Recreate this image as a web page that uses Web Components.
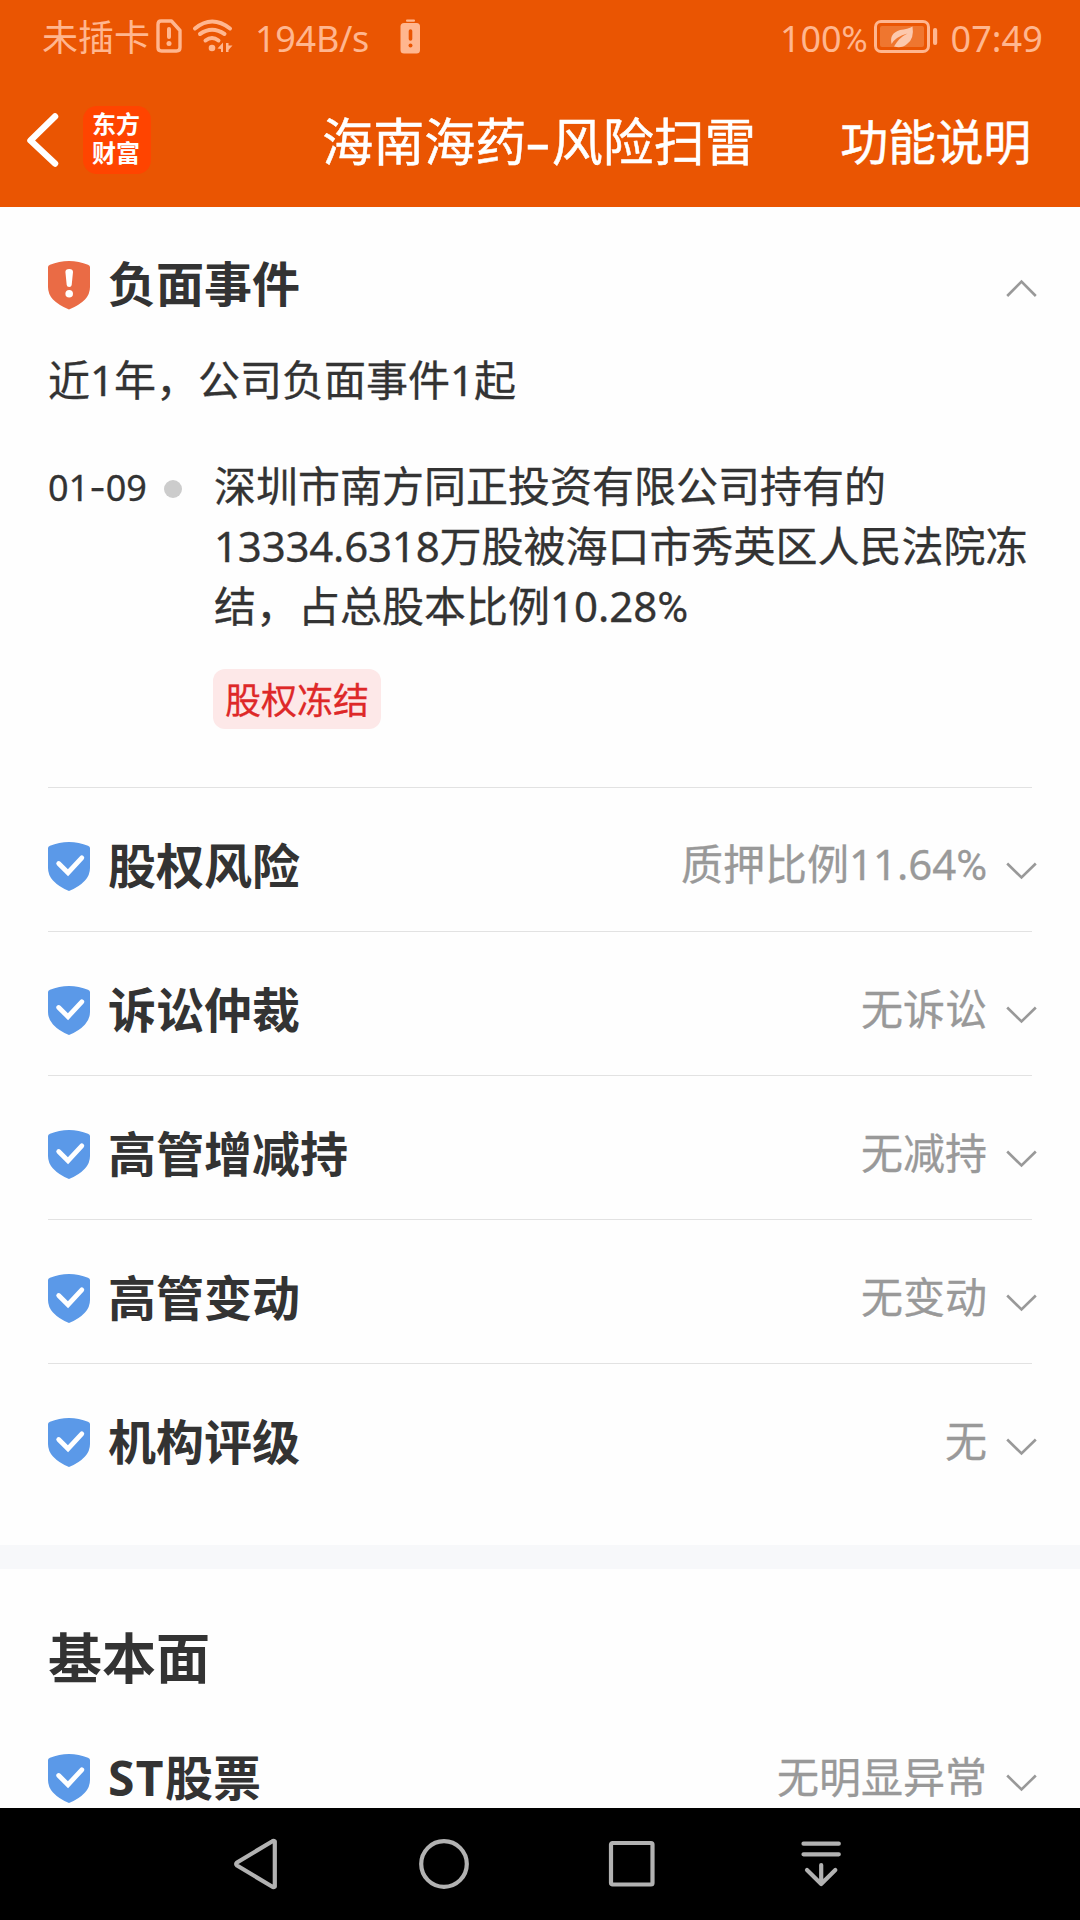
<!DOCTYPE html>
<html lang="zh-CN">
<head>
<meta charset="utf-8">
<title>海南海药-风险扫雷</title>
<style>
  html, body { margin: 0; height: 100%; }
  body { width: 1080px; height: 1920px; overflow: hidden; background: #fefefe; font-family: "Noto Sans", "Noto Sans CJK SC", sans-serif; color: #333; }
</style>
</head>
<body>
<risk-app></risk-app>
<script>
const define = (name, html) => {
  const template = document.createElement('template');
  template.innerHTML = html;
  customElements.define(name, class extends HTMLElement {
    constructor() {
      super();
      this.attachShadow({ mode: 'open' }).append(template.content.cloneNode(true));
    }
  });
};

define('status-bar', `
<style>
  :host { display: flex; justify-content: space-between; align-items: center; height: 76px; padding: 0 37px 0 42px; box-sizing: border-box; font-size: 36px; line-height: 48px; color: #ffb68f; }
  .g { display: flex; align-items: center; height: 76px; }
  svg { display: block; flex: none; }
  .sim { margin-left: 5px; } .wifi { margin-left: 9px; }
  .speed { margin: 2px 0 0 22px; width: 112px; white-space: nowrap; letter-spacing: -.3px; }
  .warn { margin-left: 32px; }
  .pct { margin-top: 2px; white-space: nowrap; letter-spacing: -.2px; }
  .pc { font-family: Roboto, sans-serif; }
  .bat { margin-left: 7px; }
  .time { margin: 2px 0 0 12px; white-space: nowrap; letter-spacing: .1px; }
</style>
<div class="g">
  <span>未插卡</span>
  <svg class="sim" width="28" height="76" viewBox="155 0 28 76" fill="none" stroke="currentColor" stroke-width="3.4" stroke-linejoin="round"><path d="M161 21H171.5L180 30.5V47.5Q180 51 176.5 51H161.500Q158 51 158 47.500V24.500Q158 21 161 21Z"/><path d="M169 29V37" stroke-width="4" stroke-linecap="round"/><circle cx="169" cy="43.500" r="2.500" fill="currentColor" stroke="none"/></svg>
  <svg class="wifi" width="41" height="76" viewBox="191 0 41 76" fill="none" stroke="currentColor" stroke-width="4" stroke-linecap="round"><path d="M194 28.500Q211 14.500 229 28.500M199 34Q211 25.500 223.500 34M204.500 40.500Q211 35.500 217.500 40.500"/><circle cx="211" cy="48" r="3.300" fill="currentColor" stroke="none"/><path d="M216.500 48.500L222 42.500V52H220V49ZM225 43V52H227.500V50L231.500 45.500L227.500 45.500V43Z" fill="currentColor" stroke="none"/></svg>
  <span class="speed">194B/s</span>
  <svg class="warn" width="22" height="76" viewBox="399 0 22 76" fill="currentColor"><rect x="406" y="19.500" width="9" height="2.200" rx="1"/><rect x="400.500" y="23" width="19.500" height="30.500" rx="3.500"/><path d="M410.500 31V39" stroke="#ea5502" stroke-width="3.600" stroke-linecap="round"/><circle cx="410.500" cy="45.500" r="2" fill="#ea5502"/></svg>
</div>
<div class="g">
  <span class="pct">100<span class="pc">%</span></span>
  <svg class="bat" width="64" height="76" viewBox="874 0 64 76" fill="none"><rect x="875.500" y="21.500" width="53" height="30" rx="5.500" stroke="currentColor" stroke-width="3"/><rect x="880" y="26" width="44" height="21" rx="2" fill="#ef762f"/><rect x="933" y="28" width="4.200" height="17" rx="2" fill="currentColor"/><path d="M891.500 44Q889 33.500 900 30Q908 29 912.500 26.500Q914.500 39 907 44Q901.500 49 894 46.500Q899 37.500 907.500 33.500Q896 36.500 891.500 44Z" fill="#fcc8ad"/></svg>
  <span class="time">07:49</span>
</div>`);

define('nav-header', `
<style>
  :host { display: grid; grid-template-columns: 1fr auto 1fr; align-items: center; height: 131px; padding: 0 49px 3px 26px; box-sizing: border-box; color: #fff; line-height: 64px; -webkit-text-stroke: .5px #fff; }
  .left { display: flex; align-items: center; }
  .logo { width: 68px; height: 68px; margin-left: 23px; box-sizing: border-box; padding: 2px 0 0 9px; border-radius: 14px; background: #ff4400; font: 700 24px/29px "Noto Sans CJK SC", sans-serif; -webkit-text-stroke: 0; }
  h1 { margin: 3px 0 0 21px; font-size: 51px; font-weight: 400; white-space: nowrap; }
  .help { margin-top: 3px; text-align: right; font-size: 48px; letter-spacing: -.3px; }
  svg { display: block; }
</style>
<div class="left">
  <svg width="34" height="60" viewBox="0 0 34 60" fill="none" stroke="#fff" stroke-width="6.500" stroke-linecap="round" stroke-linejoin="round"><path d="M29 6.500L4.500 30.500L29 53.500"/></svg>
  <div class="logo">东方<br>财富</div>
</div>
<h1><slot></slot></h1>
<div class="help"><slot name="action"></slot></div>`);

define('shield-ok', `
<style>:host { display: block; flex: none; width: 42px; height: 49px; } svg { display: block; }</style>
<svg width="42" height="49" viewBox="0 0 42 49"><path d="M0 6Q0 4.500 2 3.800Q11 0 21 0T40 3.800Q42 4.500 42 6V26Q42 33 37 38.500Q31 45 21 49Q11 45 5 38.500Q0 33 0 26Z" fill="#5b99e8"/><path d="M10.700 21.500L20 30.700L33.800 15.800" fill="none" stroke="#fff" stroke-width="4.800" stroke-linecap="round" stroke-linejoin="miter"/></svg>`);

define('shield-alert', `
<style>:host { display: block; flex: none; width: 42px; height: 49px; } svg { display: block; }</style>
<svg width="42" height="49" viewBox="0 0 42 49"><path d="M0 6Q0 4.500 2 3.800Q11 0 21 0T40 3.800Q42 4.500 42 6V26Q42 33 37 38.500Q31 44.500 21 48.500Q11 44.500 5 38.500Q0 33 0 26Z" fill="#ea6b45"/><path d="M17.400 11Q17.400 8 21.200 8T25 11L23.700 24Q23.500 26 21.200 26T18.700 24Z" fill="#fff"/><circle cx="21.200" cy="32.700" r="3.800" fill="#fff"/></svg>`);

define('risk-row', `
<style>
  :host { display: flex; align-items: center; height: 144px; box-sizing: border-box; padding-top: 13px; border-top: 1px solid #e2e2e2; }
  :host([plain]) { border-top-color: transparent; }
  :host([open]) { height: 155px; padding-top: 1px; border: 0; }
  h2 { flex: 1; margin: 0 0 0 18px; font-size: 48px; line-height: 60px; font-weight: 700; white-space: nowrap; }
  :host([open]) h2 { margin-top: -2px; }
  .note { font-size: 42px; line-height: 60px; margin-top: -2px; color: #999; white-space: nowrap; -webkit-text-stroke: .3px #999; }
  svg { display: block; flex: none; margin: 0 -5px 0 19px; }
  .up, :host([open]) .down { display: none; }
  :host([open]) .up { display: block; }
</style>
<slot name="icon"><shield-ok></shield-ok></slot>
<h2><slot></slot></h2>
<span class="note"><slot name="note"></slot></span>
<svg width="31" height="48" viewBox="0 0 31 48" fill="none" stroke="#999" stroke-width="2.600"><path class="down" d="M1.200 21.500L15.500 35.500L29.800 21.500"/><path class="up" d="M1.200 35L15.500 20.500L29.800 35"/></svg>`);

define('risk-event', `
<style>
  :host { display: flex; height: 331px; -webkit-text-stroke: .3px; }
  .date { width: 116px; font-size: 36px; line-height: 64px; white-space: nowrap; }
  .dot { width: 18px; height: 18px; margin: 24px 32px 0 0; border-radius: 50%; background: #ccc; }
  .body { flex: 1; font-size: 42px; line-height: 60px; white-space: nowrap; }
  .tag { display: block; width: max-content; height: 60px; margin: 31px 0 0 -1px; padding: 0 12px; border-radius: 12px; background: #fde8e8; color: #de2828; font-size: 36px; line-height: 63px; }
</style>
<div class="date"><slot name="date"></slot></div>
<div class="dot"></div>
<div class="body"><slot></slot><span class="tag"><slot name="tag"></slot></span></div>`);

define('system-nav', `
<style>
  :host { display: grid; grid-template-columns: repeat(4, 188.5px); justify-content: start; align-items: center; justify-items: center; height: 112px; padding-left: 161px; background: #000; }
  svg { display: block; fill: none; stroke: #b2b2b2; stroke-width: 4.200; stroke-linecap: round; stroke-linejoin: round; }
</style>
<svg width="52" height="56" viewBox="229 1836 52 56"><path d="M274.800 1841.500V1886.500Q273.500 1887.500 272 1886.500L237 1865.500Q235.500 1864 237 1862.500L272 1841.500Q273.500 1840.500 274.800 1841.500Z"/></svg>
<svg width="56" height="56" viewBox="0 0 56 56"><circle cx="28" cy="28" r="22.800"/></svg>
<svg width="56" height="56" viewBox="0 0 56 56"><rect x="7" y="7" width="41.500" height="41.500" rx="1.500"/></svg>
<svg width="56" height="56" viewBox="793 1836 56 56"><path d="M803.500 1843.700H838.800M803.500 1854.300H838.800M821.200 1865V1883M807 1870L821.200 1884L835.300 1870"/></svg>`);

define('risk-app', `
<style>
  :host { display: flex; flex-direction: column; width: 1080px; height: 1920px; }
  header { background: #ea5502; height: 207px; }
  main { height: 1601px; overflow: hidden; }
  .first { height: 1338px; box-sizing: border-box; padding: 0 48px; }
  .summary { margin: 0; height: 94px; font-size: 42px; line-height: 35px; white-space: nowrap; -webkit-text-stroke: .3px; }
  .gap { height: 24px; background: #f7f8fa; }
  .second { padding: 46px 48px 0; }
  .second h1 { margin: 0; height: 84px; font-size: 54px; line-height: 86px; font-weight: 700; }
  .hy { font-family: Inter, sans-serif; }
  .wide { display: inline-block; margin-right: 2px; transform: translateY(2px) scaleX(1.2); }
  .pc { font-family: Roboto, sans-serif; }
  .num { letter-spacing: -.2px; }
  .st { letter-spacing: 1.4px; }
  system-nav { flex: none; }
</style>
<header>
  <status-bar></status-bar>
  <nav-header>海南海药<span class="hy wide">-</span>风险扫雷<span slot="action">功能说明</span></nav-header>
</header>
<main>
  <section class="first">
    <risk-row open><shield-alert slot="icon"></shield-alert>负面事件</risk-row>
    <p class="summary">近1年，公司负面事件1起</p>
    <risk-event>
      <span slot="date">01<span class="hy">-</span>09</span>深圳市南方同正投资有限公司持有的<br><span class="num">13334.6318</span>万股被海口市秀英区人民法院冻<br>结，占总股本比例10.28<span class="pc">%</span><span slot="tag">股权冻结</span>
    </risk-event>
    <risk-row>股权风险<span slot="note">质押比例11.64<span class="pc">%</span></span></risk-row>
    <risk-row>诉讼仲裁<span slot="note">无诉讼</span></risk-row>
    <risk-row>高管增减持<span slot="note">无减持</span></risk-row>
    <risk-row>高管变动<span slot="note">无变动</span></risk-row>
    <risk-row>机构评级<span slot="note">无</span></risk-row>
  </section>
  <div class="gap"></div>
  <section class="second">
    <h1>基本面</h1>
    <risk-row plain><span class="st">ST</span>股票<span slot="note">无明显异常</span></risk-row>
  </section>
</main>
<system-nav></system-nav>`);
</script>
</body>
</html>
